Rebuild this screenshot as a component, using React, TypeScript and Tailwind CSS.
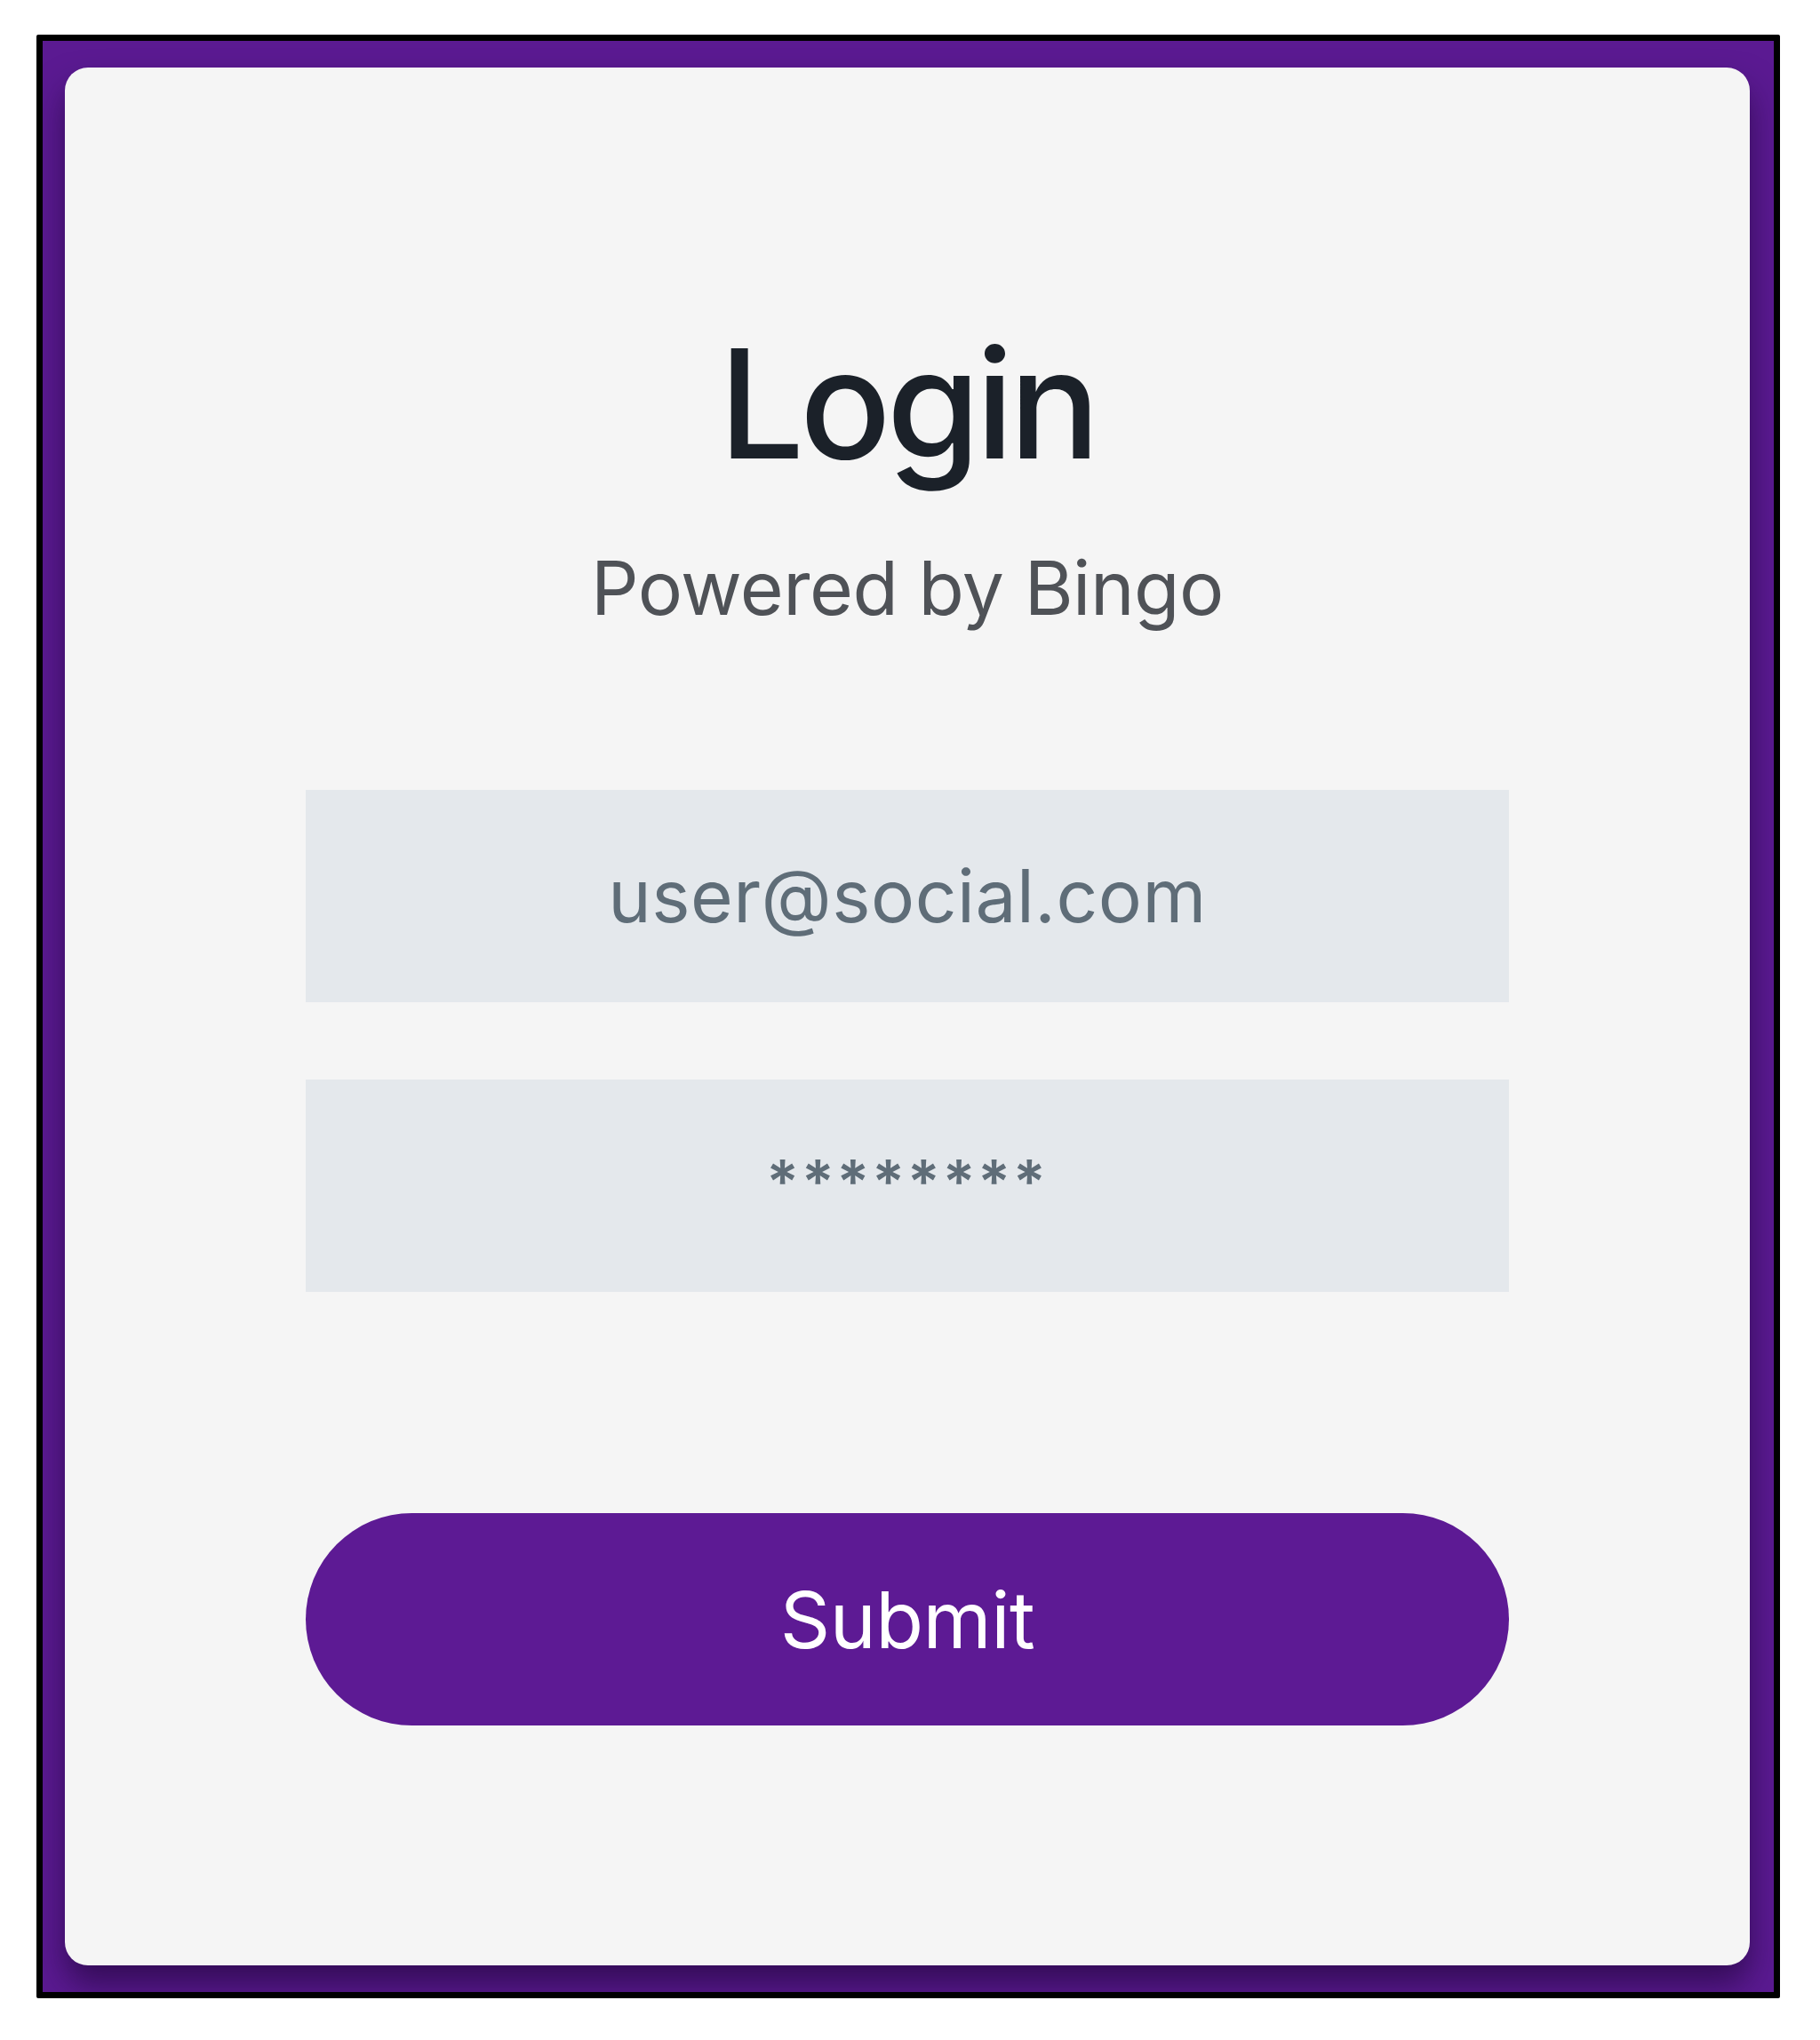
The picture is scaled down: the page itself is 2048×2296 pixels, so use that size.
export default function App() {
  return (
    <div className="min-h-[2296px] w-[2048px] bg-white pl-[41px] pt-[39px]" style={{ fontFamily: 'Inter, "Noto Sans", sans-serif' }}>
      {/* Outer frame */}
      <div className="w-[1962px] h-[2210px] overflow-hidden border-[7px] border-black bg-[#5b1a92] pt-[30px] pl-[25px] pr-[27px] pb-[30px] rounded-[2px]">
        {/* Card */}
        <div className="flex h-full w-full flex-col items-center rounded-[26px] bg-[#f5f5f5] px-[271px] pt-[293px] shadow-[0_22px_36px_rgba(20,0,40,0.55)]">
          <h1 className="text-[170px] leading-none font-medium text-[#1b2129] tracking-[-5px]">Login</h1>
          <p className="mt-[81px] text-[84px] leading-none text-[#4f5257] tracking-[-0.5px]">Powered by Bingo</p>

          <div className="mt-[185px] flex h-[239px] w-full items-center justify-center bg-[#e4e8ec] text-[82px] text-[#5f6d78] tracking-[0.5px]">
            user@social.com
          </div>
          <div className="mt-[87px] flex h-[239px] w-full items-center justify-center bg-[#e4e8ec] pb-[12px] text-[68px] font-semibold tracking-[3px] text-[#5f6d78]">
            ********
          </div>

          <button className="mt-[249px] flex h-[239px] w-full items-center justify-center rounded-full bg-[#5d1a94] text-[88px] text-white tracking-[-0.5px]">
            Submit
          </button>
        </div>
      </div>
    </div>
  );
}
